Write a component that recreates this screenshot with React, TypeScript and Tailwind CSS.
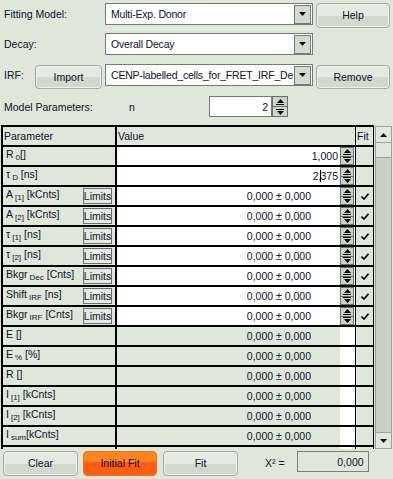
import React from 'react'

type Row = {
  base: string
  sub: string
  unit: string
  gap?: boolean
  value?: string
  caret?: boolean
  limits?: boolean
  fit?: boolean
}

const inputRows: Row[] = [
  { base: 'R', sub: '0', unit: '[]', value: '1,000' },
  { base: 'τ', sub: 'D', unit: '[ns]', gap: true, value: '2,375', caret: true },
  { base: 'A', sub: '[1]', unit: '[kCnts]', gap: true, limits: true, fit: true },
  { base: 'A', sub: '[2]', unit: '[kCnts]', gap: true, limits: true, fit: true },
  { base: 'τ', sub: '[1]', unit: '[ns]', gap: true, limits: true, fit: true },
  { base: 'τ', sub: '[2]', unit: '[ns]', gap: true, limits: true, fit: true },
  { base: 'Bkgr', sub: 'Dec', unit: '[Cnts]', gap: true, limits: true, fit: true },
  { base: 'Shift', sub: 'IRF', unit: '[ns]', gap: true, limits: true, fit: true },
  { base: 'Bkgr', sub: 'IRF', unit: '[Cnts]', gap: true, limits: true, fit: true },
]

const calcRows: Row[] = [
  { base: 'E', sub: '', unit: '[]', gap: true },
  { base: 'E', sub: '%', unit: '[%]', gap: true },
  { base: 'R', sub: '', unit: '[]', gap: true },
  { base: 'I', sub: '[1]', unit: '[kCnts]', gap: true },
  { base: 'I', sub: '[2]', unit: '[kCnts]', gap: true },
  { base: 'I', sub: 'sum', unit: '[kCnts]' },
  { base: '', sub: '', unit: '' },
]

function Tri({ up = false }: { up?: boolean }) {
  return (
    <svg width="7" height="4" viewBox="0 0 7 4" className="block">
      <path d={up ? 'M0 4L3.5 0L7 4Z' : 'M0 0L7 0L3.5 4Z'} fill="#000" />
    </svg>
  )
}

function Check() {
  return (
    <svg width="8" height="7" viewBox="0 0 8 7" className="block">
      <path d="M0.5 3.5L3 6L7.5 0.8" stroke="#000" strokeWidth="1.6" fill="none" />
    </svg>
  )
}

function Spin({ className = '' }: { className?: string }) {
  return (
    <div className={`flex flex-col border border-[#6c706a] bg-[#cdd3ca] ${className}`}>
      <div className="flex-1 flex flex-col items-center justify-center border-b border-[#6c706a]">
        <Tri up />
        <div className="mt-[1px] h-px w-[8px] bg-black" />
      </div>
      <div className="flex-1 flex flex-col items-center justify-center">
        <div className="mb-[1px] h-px w-[8px] bg-black" />
        <Tri />
      </div>
    </div>
  )
}

function Btn({ children, className = '' }: { children: React.ReactNode; className?: string }) {
  return (
    <div
      className={`flex items-center justify-center rounded-[4px] border border-[#a2a99f] bg-[linear-gradient(#e5eae3_0%,#e5eae3_52%,#d1d9cd_52%,#d1d9cd_100%)] shadow-[inset_0_0_0_1px_#edf1eb] ${className}`}
    >
      {children}
    </div>
  )
}

function Dropdown({ text, className = '' }: { text: string; className?: string }) {
  return (
    <div className={`flex items-center border border-[#767a74] bg-white ${className}`}>
      <span className="flex-1 whitespace-nowrap pl-[5px] tracking-[-0.2px]">{text}</span>
      <div className="mr-[1px] flex h-[19px] w-[17px] items-center justify-center border border-[#767a74] bg-[#d3dad0]">
        <Tri />
      </div>
    </div>
  )
}

function Label({ row }: { row: Row }) {
  return (
    <span className="whitespace-nowrap">
      {row.base}
      {row.sub && <span className="ml-[2px] text-[8px] align-[-2px]">{row.sub}</span>}
      {row.gap ? ' ' : ''}
      {row.unit}
    </span>
  )
}

export default function App() {
  return (
    <div className="relative h-[479px] w-[393px] overflow-hidden bg-[#dfe7db] font-['Liberation_Sans',Arial,sans-serif] text-[10.5px] leading-[13px] text-[#10102a]">
      {/* Settings */}
      <div className="pl-[4px] pt-[3px]">
        <div className="flex h-[25px] items-start">
          <div className="w-[101px] pt-[5px]">Fitting Model:</div>
          <Dropdown text="Multi-Exp. Donor" className="h-[22px] w-[208px]" />
          <Btn className="ml-[3px] h-[25px] w-[74px]">Help</Btn>
        </div>
        <div className="mt-[5px] flex h-[22px] items-start">
          <div className="w-[101px] pt-[5px]">Decay:</div>
          <Dropdown text="Overall Decay" className="h-[22px] w-[208px]" />
        </div>
        <div className="mt-[9px] flex h-[26px] items-start">
          <div className="w-[31px] pt-[5px]">IRF:</div>
          <Btn className="mt-[1px] h-[24px] w-[67px]">Import</Btn>
          <Dropdown text="CENP-labelled_cells_for_FRET_IRF_De" className="ml-[3px] h-[22px] w-[208px]" />
          <Btn className="ml-[3px] mt-[1px] h-[24px] w-[74px]">Remove</Btn>
        </div>
        <div className="mt-[6px] flex h-[21px] items-start">
          <div className="w-[125px] pt-[5px]">Model Parameters:</div>
          <div className="w-[80px] pt-[5px]">n</div>
          <div className="h-[21px] w-[63px] border border-[#767a74] bg-white pr-[3px] pt-[4px] text-right">2</div>
          <Spin className="h-[21px] w-[16px]" />
        </div>
      </div>

      {/* Parameter table */}
      <div className="mt-[8px] flex h-[324px]">
        <div className="ml-[1px] w-[373px] overflow-hidden border-l-2 border-t-2 border-black">
          <div className="flex h-[20px] border-b-2 border-black">
            <div className="flex w-[114px] items-center border-r-2 border-black pl-[1px]">Parameter</div>
            <div className="flex w-[238px] items-center pl-[1px]">Value</div>
            <div className="flex w-[19px] items-center border-x border-black pl-[1px]">Fit</div>
          </div>
          {inputRows.map((row, i) => (
            <div key={i} className="flex h-[20px] border-b-2 border-black">
              <div className="flex w-[114px] items-start border-r-2 border-black pl-[3px] pt-[1px]">
                <Label row={row} />
                {row.limits && (
                  <div className="ml-auto mr-[3px] flex h-[16px] w-[29px] items-center justify-center border border-[#6c706a] bg-[#e6eae4]">
                    Limits
                  </div>
                )}
              </div>
              <div
                className={`flex w-[223px] items-center justify-end bg-white ${row.value ? 'pr-[2px]' : 'pr-[29px]'}`}
              >
                {row.caret ? (
                  <span>
                    2,<span className="mx-[-1px] inline-block h-[12px] w-px bg-black align-[-2px]" />375
                  </span>
                ) : (
                  <span className="whitespace-pre">{row.value ?? '0,000 ± 0,000'}</span>
                )}
              </div>
              <div className="w-[15px] bg-white">
                <Spin className="h-[18px] w-[14px]" />
              </div>
              <div className="flex w-[19px] items-center justify-center border-x border-black">
                {row.fit && <Check />}
              </div>
            </div>
          ))}
          {calcRows.map((row, i) => (
            <div key={i} className="flex h-[20px] border-b-2 border-black">
              <div className="flex w-[114px] items-start border-r-2 border-black pl-[3px] pt-[1px]">
                <Label row={row} />
              </div>
              <div className="flex w-[223px] items-center justify-end pr-[29px]">
                {row.base && <span>0,000 ± 0,000</span>}
              </div>
              <div className="w-[15px] bg-white" />
              <div className="w-[19px] border-x border-black" />
            </div>
          ))}
        </div>

        {/* Scrollbar */}
        <div className="ml-[1px] mt-[1px] flex w-[17px] flex-col border border-[#9aa397] bg-[#c8d1c4]">
          <div className="flex h-[16px] items-center justify-center border-b border-[#9aa397] bg-[#e1e8de]">
            <Tri up />
          </div>
          <div className="h-[15px] border-b border-[#9aa397] bg-[#dfe6dc]" />
          <div className="flex-1" />
          <div className="flex h-[16px] items-center justify-center border-t border-[#9aa397] bg-[#e1e8de]">
            <Tri />
          </div>
        </div>
      </div>

      {/* Actions */}
      <div className="mt-[2px] flex items-start pl-[3px]">
        <Btn className="h-[25px] w-[75px]">Clear</Btn>
        <div className="ml-[5px] flex h-[25px] w-[74px] items-center justify-center rounded-[4px] border border-[#e8741a] bg-[linear-gradient(#ff861f_0%,#ff861f_45%,#ff5c14_45%,#ff5c14_100%)]">
          Initial Fit
        </div>
        <Btn className="ml-[6px] h-[25px] w-[75px]">Fit</Btn>
        <div className="ml-[27px] pt-[6px]">X² =</div>
        <div className="ml-[12px] h-[21px] w-[72px] border border-[#7c807a] pr-[4px] pt-[4px] text-right">0,000</div>
      </div>
    </div>
  )
}
